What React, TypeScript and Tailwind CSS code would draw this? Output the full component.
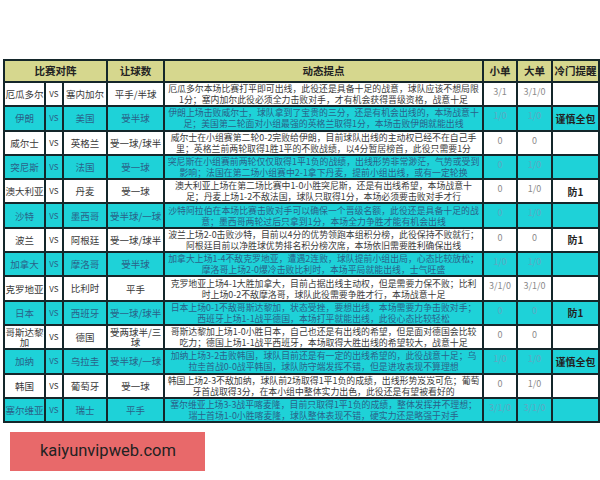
import React from "react";

type Row = {
  a: string;
  b: string;
  h: string;
  t: string;
  s: string;
  d: string;
  c: string;
};

const rows: Row[] = [
  { a: "厄瓜多尔", b: "塞内加尔", h: "平手/半球", t: "厄瓜多尔本场比赛打平即可出线，此役还是具备十足的战意，球队应该不想局限1分；塞内加尔此役必须全力击败对手，才有机会获得晋级资格，战意十足", s: "3/1", d: "3/1/0", c: "" },
  { a: "伊朗", b: "美国", h: "受半球", t: "伊朗上场击败威尔士，球队拿到了宝贵的三分，还是有机会出线的，本场战意十足；美国第二轮面对小组最强的英格兰取得1分，本场击败伊朗就能出线", s: "1/0", d: "1/0", c: "谨慎全包" },
  { a: "威尔士", b: "英格兰", h: "受一球/球半", t: "威尔士在小组赛第二轮0-2完败给伊朗，目前球队出线的主动权已经不在自己手里；英格兰前两轮取得1胜1平的不败战绩，以4分暂居榜首，此役只需要1分", s: "0", d: "0", c: "" },
  { a: "突尼斯", b: "法国", h: "受一球", t: "突尼斯在小组赛前两轮仅仅取得1平1负的战绩，出线形势非常渺茫，气势或受到影响；法国在第二场小组赛中2-1拿下丹麦，提前小组出线，或有一定轮换", s: "0", d: "1/0", c: "" },
  { a: "澳大利亚", b: "丹麦", h: "受一球", t: "澳大利亚上场在第二场比赛中1-0小胜突尼斯，还是有出线希望，本场战意十足；丹麦上场1-2不敌法国，球队只取得1分，本场必须要击败对手才行", s: "0", d: "1/0", c: "防1" },
  { a: "沙特", b: "墨西哥", h: "受半球/一球", t: "沙特阿拉伯在本场比赛击败对手可以确保一个晋级名额，此役还是具备十足的战意；墨西哥两轮过后只拿到1分，本场全力争胜才能有机会出线", s: "0", d: "1/0", c: "" },
  { a: "波兰", b: "阿根廷", h: "受一球/球半", t: "波兰上场2-0击败沙特，目前以4分的优势领跑本组积分榜，此役保持不败就行；阿根廷目前以净胜球优势排名积分榜次席，本场依旧需要胜利确保出线", s: "0", d: "0", c: "防1" },
  { a: "加拿大", b: "摩洛哥", h: "受半球", t: "加拿大上场1-4不敌克罗地亚，遭遇2连败，球队提前小组出局，心态比较放松；摩洛哥上场2-0爆冷击败比利时，本场平局就能出线，士气旺盛", s: "1/0", d: "1/0", c: "" },
  { a: "克罗地亚", b: "比利时", h: "平手", t: "克罗地亚上场4-1大胜加拿大，目前占据出线主动权，但是需要力保不败；比利时上场0-2不敌摩洛哥，球队此役需要争胜才行，本场战意十足", s: "3/1/0", d: "3/1/0", c: "" },
  { a: "日本", b: "西班牙", h: "受一球/球半", t: "日本上场0-1不敌哥斯达黎加，状态受挫，要想出线，本场需要力争击败对手；西班牙上场1-1战平德国，本场打平就能出线，此役心态比较轻松", s: "0", d: "0", c: "防1" },
  { a: "哥斯达黎加", b: "德国", h: "受两球半/三球", t: "哥斯达黎加上场1-0小胜日本，自己也还是有出线的希望，但是面对德国会比较吃力；德国上场1-1战平西班牙，本场取得大胜出线的希望较大，战意十足", s: "0", d: "0", c: "" },
  { a: "加纳", b: "乌拉圭", h: "受半球/一球", t: "加纳上场3-2击败韩国，球队目前还是有一定的出线希望的，此役战意十足；乌拉圭首战0-0战平韩国，球队防守端发挥不错，但是进攻表现不算理想", s: "1/0", d: "1/0", c: "谨慎全包" },
  { a: "韩国", b: "葡萄牙", h: "受一球", t: "韩国上场2-3不敌加纳，球队前2场取得1平1负的成绩，出线形势岌岌可危；葡萄牙首战取得3分，在本小组中整体实力出色，此役还是有望被看好的", s: "0", d: "1/0", c: "" },
  { a: "塞尔维亚", b: "瑞士", h: "平手", t: "塞尔维亚上场3-3战平喀麦隆，目前只取得1平1负的成绩，整体发挥并不理想；瑞士首场1-0小胜喀麦隆，球队整体表现不错，硬实力还是略强于对手", s: "3/1/0", d: "3/1/0", c: "" },
];

const font = { fontFamily: '"Noto Sans CJK SC", "Noto Sans", sans-serif' };

export default function App() {
  return (
    <div className="w-[600px] h-[480px] bg-white overflow-hidden" style={font}>
      <div className="pt-[59px] pl-[3px]">
        <table className="table-fixed border-collapse w-[595px] border-2 border-[#14262a]">
          <colgroup>
            <col className="w-[41px]" />
            <col className="w-[18px]" />
            <col className="w-[44px]" />
            <col className="w-[57px]" />
            <col className="w-[319px]" />
            <col className="w-[34px]" />
            <col className="w-[35px]" />
            <col className="w-[47px]" />
          </colgroup>
          <thead>
            <tr className="bg-[#d6d78e] text-[10.5px] font-bold text-[#222]">
              <th colSpan={3} className="border-2 border-[#14262a] p-0"><div className="h-[20px] leading-[20px] overflow-hidden">比赛对阵</div></th>
              <th className="border-2 border-[#14262a] p-0"><div className="h-[20px] leading-[20px] overflow-hidden">让球数</div></th>
              <th className="border-2 border-[#14262a] p-0"><div className="h-[20px] leading-[20px] overflow-hidden">动态提点</div></th>
              <th className="border-2 border-[#14262a] p-0"><div className="h-[20px] leading-[20px] overflow-hidden">小单</div></th>
              <th className="border-2 border-[#14262a] p-0"><div className="h-[20px] leading-[20px] overflow-hidden">大单</div></th>
              <th className="border-2 border-[#14262a] p-0 whitespace-nowrap"><div className="h-[20px] leading-[20px] overflow-hidden">冷门提醒</div></th>
            </tr>
          </thead>
          <tbody>
            {rows.map((r, i) => {
              const cyan = i % 2 === 1;
              const rowCls = cyan ? "bg-[#1ed2d8] text-[#2a6289]" : "bg-white text-[#3a3a3a]";
              const numCls = cyan ? "text-[#5fa9c2]" : "text-[#8a8a8a]";
              return (
                <tr key={i} className={rowCls}>
                  <td className="border-2 border-[#14262a] p-0 text-center text-[9.5px] leading-[10px]">
                    <div className="h-[22.3px] flex items-center justify-center overflow-hidden">{r.a}</div>
                  </td>
                  <td className="border-2 border-[#14262a] p-0 text-center text-[8px]">
                    <div className="h-[22.3px] flex items-center justify-center overflow-hidden">VS</div>
                  </td>
                  <td className="border-2 border-[#14262a] p-0 text-center text-[9.5px]">
                    <div className="h-[22.3px] flex items-center justify-center overflow-hidden">{r.b}</div>
                  </td>
                  <td className="border-2 border-[#14262a] p-0 text-center text-[9.5px] leading-[10px]">
                    <div className="h-[22.3px] flex items-center justify-center overflow-hidden">{r.h}</div>
                  </td>
                  <td className="border-2 border-[#14262a] px-[2px] py-0 text-center text-[8.9px] leading-[11px]">
                    <div className="h-[22.3px] flex items-center justify-center overflow-hidden">{r.t}</div>
                  </td>
                  <td className={`border-2 border-[#14262a] p-0 text-center text-[9px] ${numCls}`}>
                    <div className="h-[22.3px] pt-[2px] overflow-hidden">{r.s}</div>
                  </td>
                  <td className={`border-2 border-[#14262a] p-0 text-center text-[9px] ${numCls}`}>
                    <div className="h-[22.3px] pt-[2px] overflow-hidden">{r.d}</div>
                  </td>
                  <td className="border-2 border-[#14262a] p-0 text-center text-[10px] font-bold text-[#222] whitespace-nowrap">
                    <div className="h-[22.3px] flex items-center justify-center overflow-hidden">{r.c}</div>
                  </td>
                </tr>
              );
            })}
          </tbody>
        </table>
      </div>
      <div className="mt-[9px] ml-[10px] w-[195px] h-[39px] bg-[#e8696a] flex items-center pl-[30px]">
        <span className="text-[16.5px] text-[#222]" style={{ fontFamily: 'Roboto, "Liberation Sans", sans-serif' }}>kaiyunvipweb.com</span>
      </div>
    </div>
  );
}
